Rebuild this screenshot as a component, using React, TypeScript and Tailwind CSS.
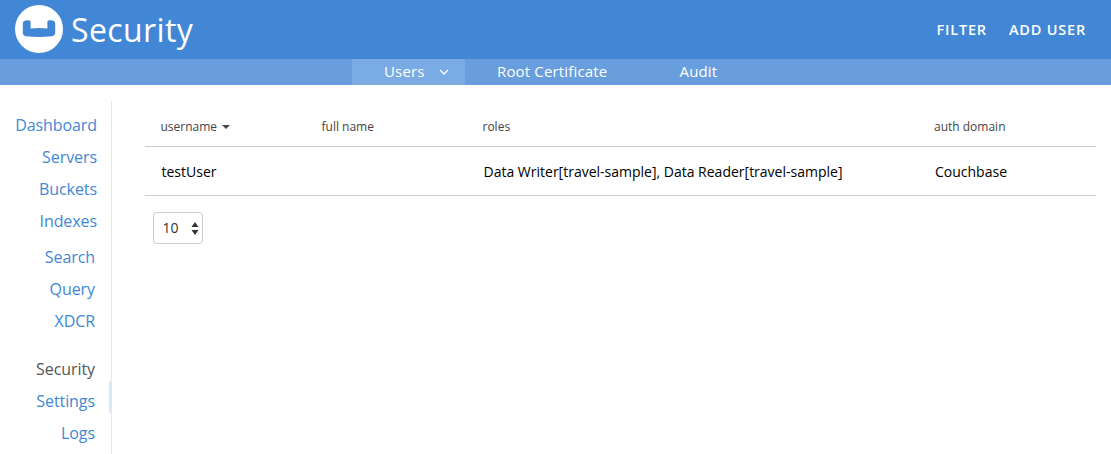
import React from "react";

type NavItem = { label: string; className: string; marked?: boolean };

const navItems: NavItem[] = [
  { label: "Dashboard", className: "pr-[14px] text-[#4287d6]" },
  { label: "Servers", className: "pr-[14px] text-[#4287d6]" },
  { label: "Buckets", className: "pr-[14px] text-[#4287d6]" },
  { label: "Indexes", className: "mb-1 pr-[14px] text-[#4287d6]" },
  { label: "Search", className: "pr-4 text-[#4287d6]" },
  { label: "Query", className: "pr-4 text-[#4287d6]" },
  { label: "XDCR", className: "mb-4 pr-4 text-[#4287d6]" },
  { label: "Security", className: "pr-4 text-[#555555]" },
  { label: "Settings", className: "pr-4 text-[#4287d6]", marked: true },
  { label: "Logs", className: "pr-4 text-[#4287d6]" },
];

function Logo() {
  return (
    <svg className="size-12" viewBox="0 0 48 48" aria-hidden="true">
      <circle cx="24" cy="24" r="24" fill="#fff" />
      <path
        d="M10.5 15.5 Q15.6 14.8 15.6 16.6 V23.4 Q24 22.8 32.4 23.4 V16.6 Q32.4 14.8 37.5 15.5 Q40.2 16 40.2 18.8 V27.4 Q40.2 30.6 37 31.2 Q24 32.7 11 31.2 Q7.8 30.6 7.8 27.4 V18.8 Q7.8 16 10.5 15.5 Z"
        fill="#4287d6"
      />
    </svg>
  );
}

function Header() {
  return (
    <header className="flex h-[59px] items-start justify-between bg-[#4287d6] pl-[15px] pr-[25px] text-white">
      <div className="flex pt-[5px]">
        <Logo />
        <h1 className="ml-2 text-[32px] leading-[49px] font-normal tracking-[0.4px]">Security</h1>
      </div>
      <div className="flex gap-[22px] pt-[19px] text-[14.5px] leading-[22px] font-semibold tracking-[0.8px]">
        <button>FILTER</button>
        <button>ADD USER</button>
      </div>
    </header>
  );
}

function Tabs() {
  return (
    <nav className="flex h-[26px] bg-[#689ede] pl-[352px] text-[15px] leading-[24px] tracking-[0.16px] text-white">
      <div className="flex w-[113px] bg-[#7babe4] pl-8">
        <span>Users</span>
        <svg className="mt-[10px] ml-[14px] h-[6px] w-[10px]" viewBox="0 0 10 6" fill="none" stroke="#fff" strokeWidth="1.3">
          <path d="M1 1 L5 5 L9 1" />
        </svg>
      </div>
      <span className="w-[183px] pl-8">Root Certificate</span>
      <span className="pl-[31.5px]">Audit</span>
    </nav>
  );
}

export default function App() {
  return (
    <div className="h-[454px] overflow-hidden bg-white font-['Open_Sans','Noto_Sans',sans-serif]">
      <Header />
      <Tabs />
      <div className="flex pt-4">
        <aside className="h-[353px] w-28 shrink-0 border-r border-[#e6e6e6] pt-2 text-right text-base leading-8 tracking-[-0.08px]">
          {navItems.map((item) => (
            <div key={item.label} className={`relative ${item.className}`}>
              {item.label}
              {item.marked && <span className="absolute -top-1 right-0 h-8 w-0.5 bg-[#d9e7f7]" />}
            </div>
          ))}
        </aside>
        <main className="ml-[33px] w-[951px]">
          <div className="grid h-[46px] grid-cols-[161px_161px_451.5px_1fr] border-b border-[#cccccc] pl-[15.5px] pt-4 text-xs leading-5 text-[#444444]">
            <div className="flex h-5 items-center">
              username
              <svg className="ml-[5px] h-1 w-2" viewBox="0 0 8 4" fill="#444">
                <path d="M0 0 H8 L4 4 Z" />
              </svg>
            </div>
            <div>full name</div>
            <div>roles</div>
            <div>auth domain</div>
          </div>
          <div className="grid h-[49px] grid-cols-[161px_161px_451.5px_1fr] items-center border-b border-[#cccccc] pt-0.5 pl-[16.5px] text-sm text-black">
            <div>testUser</div>
            <div />
            <div>Data Writer[travel-sample], Data Reader[travel-sample]</div>
            <div>Couchbase</div>
          </div>
          <button className="mt-4 ml-2 flex h-8 w-[50px] items-center justify-between rounded-[4px] border border-[#cccccc] pl-[8.5px] pr-[3.5px] text-sm text-[#333333]">
            10
            <svg className="h-[13px] w-[8px]" viewBox="0 0 8 13" fill="#333">
              <path d="M4 0 L7.5 5 H0.5 Z M0.5 8 H7.5 L4 13 Z" />
            </svg>
          </button>
        </main>
      </div>
    </div>
  );
}
